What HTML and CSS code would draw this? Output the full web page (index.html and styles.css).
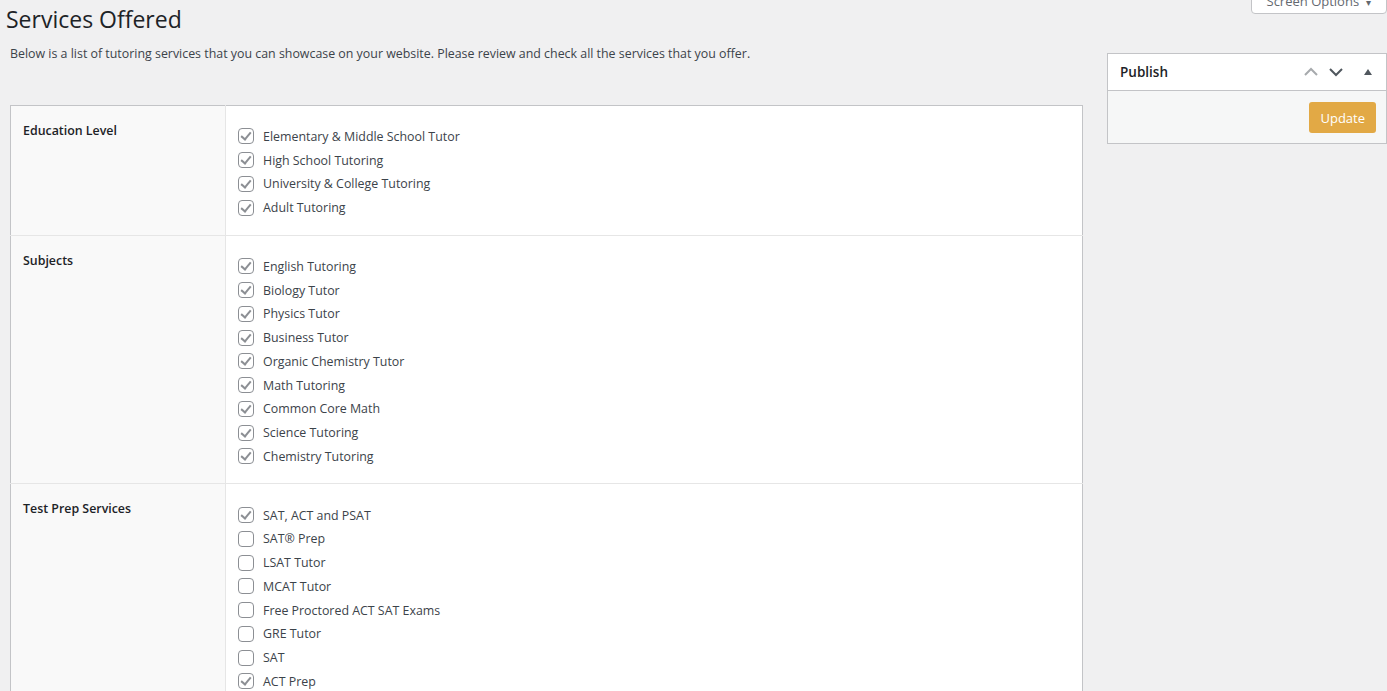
FILE: index.html
```html
<!DOCTYPE html>
<html lang="en">
<head>
    <meta charset="UTF-8">
    <meta name="viewport" content="width=device-width, initial-scale=1.0">
    <title>Services Offered</title>
    <link rel="stylesheet" href="styles.css">
</head>
<body>
    <div class="screen-tab">Screen Options <span class="caret">&#9662;</span></div>
    <div class="page">
        <div class="main">
            <h1>Services Offered</h1>
            <p class="intro">Below is a list of tutoring services that you can showcase on your website. Please review and check all the services that you offer.</p>
            <table class="services">
                <tr>
                    <th>Education Level</th>
                    <td>
                        <label class="item"><input type="checkbox" checked> Elementary &amp; Middle School Tutor</label>
                        <label class="item"><input type="checkbox" checked> High School Tutoring</label>
                        <label class="item"><input type="checkbox" checked> University &amp; College Tutoring</label>
                        <label class="item"><input type="checkbox" checked> Adult Tutoring</label>
                    </td>
                </tr>
                <tr>
                    <th>Subjects</th>
                    <td>
                        <label class="item"><input type="checkbox" checked> English Tutoring</label>
                        <label class="item"><input type="checkbox" checked> Biology Tutor</label>
                        <label class="item"><input type="checkbox" checked> Physics Tutor</label>
                        <label class="item"><input type="checkbox" checked> Business Tutor</label>
                        <label class="item"><input type="checkbox" checked> Organic Chemistry Tutor</label>
                        <label class="item"><input type="checkbox" checked> Math Tutoring</label>
                        <label class="item"><input type="checkbox" checked> Common Core Math</label>
                        <label class="item"><input type="checkbox" checked> Science Tutoring</label>
                        <label class="item"><input type="checkbox" checked> Chemistry Tutoring</label>
                    </td>
                </tr>
                <tr>
                    <th>Test Prep Services</th>
                    <td>
                        <label class="item"><input type="checkbox" checked> SAT, ACT and PSAT</label>
                        <label class="item"><input type="checkbox"> SAT® Prep</label>
                        <label class="item"><input type="checkbox"> LSAT Tutor</label>
                        <label class="item"><input type="checkbox"> MCAT Tutor</label>
                        <label class="item"><input type="checkbox"> Free Proctored ACT SAT Exams</label>
                        <label class="item"><input type="checkbox"> GRE Tutor</label>
                        <label class="item"><input type="checkbox"> SAT</label>
                        <label class="item"><input type="checkbox" checked> ACT Prep</label>
                    </td>
                </tr>
            </table>
        </div>
        <div class="side">
            <div class="postbox">
                <div class="postbox-head">
                    <h2>Publish</h2>
                    <div class="handles">
                        <svg width="16" height="10" viewBox="0 0 16 10"><path d="M2 8 L8 2 L14 8" fill="none" stroke="#a7aaad" stroke-width="2"/></svg>
                        <svg width="16" height="10" viewBox="0 0 16 10"><path d="M2 2 L8 8 L14 2" fill="none" stroke="#50575e" stroke-width="2"/></svg>
                        <svg class="toggle" width="10" height="8" viewBox="0 0 10 8"><path d="M1 7 L5 1 L9 7 Z" fill="#50575e"/></svg>
                    </div>
                </div>
                <div class="postbox-body">
                    <button class="update" type="button">Update</button>
                </div>
            </div>
        </div>
    </div>
</body>
</html>
```

FILE: styles.css
```css
body {
    margin: 0;
    background-color: #f0f0f1;
    color: #3c434a;
    font-family: "Open Sans", "Noto Sans", sans-serif;
    font-size: 12.4px;
}

.screen-tab {
    position: absolute;
    top: -12px;
    right: 0;
    width: 136px;
    height: 26px;
    line-height: 24px;
    text-align: center;
    background-color: #fff;
    border: 1px solid #c3c4c7;
    border-radius: 0 0 4px 4px;
    color: #646970;
    font-size: 13px;
    box-sizing: border-box;
}

.caret {
    font-size: 10px;
    margin-left: 4px;
}

.page {
    display: flex;
    align-items: flex-start;
}

.main {
    width: 1073px;
    margin-left: 10px;
}

h1 {
    margin: 0 0 0 -4px;
    padding-top: 5px;
    font-size: 23px;
    font-weight: 400;
    line-height: 1.3;
    color: #1d2327;
}

.intro {
    margin: 10px 0 41px 0;
    line-height: 1.5;
}

.services {
    width: 100%;
    border-collapse: collapse;
    background-color: #fff;
    border: 1px solid #c3c4c7;
}

.services th {
    width: 190px;
    padding: 16px 12px 15px 12px;
    text-align: left;
    vertical-align: top;
    font-weight: 600;
    color: #1d2327;
    background-color: #f9f9f9;
    border-right: 1px solid #e6e6e6;
    border-bottom: 1px solid #e6e6e6;
    line-height: 1.4;
}

.services td {
    padding: 19px 12px 15px 12px;
    vertical-align: top;
    border-bottom: 1px solid #e6e6e6;
}

.item {
    display: flex;
    align-items: center;
    height: 23.75px;
}

.item input {
    appearance: none;
    width: 16px;
    height: 16px;
    margin: 0 9px 0 0;
    border: 1px solid #8c8f94;
    border-radius: 4px;
    background: #fff;
    position: relative;
}

.item input:checked::after {
    content: "";
    position: absolute;
    left: 4px;
    top: 1px;
    width: 4px;
    height: 8px;
    border: solid #8c8f94;
    border-width: 0 2px 2px 0;
    transform: rotate(40deg);
}

.side {
    width: 280px;
    margin-left: 24px;
    margin-top: 53px;
}

.postbox {
    background-color: #f6f7f7;
    border: 1px solid #c3c4c7;
}

.postbox-head {
    display: flex;
    align-items: center;
    justify-content: space-between;
    height: 36px;
    padding-left: 12px;
    background-color: #fff;
    border-bottom: 1px solid #c3c4c7;
}

.postbox-head h2 {
    margin: 0;
    font-size: 13.5px;
    font-weight: 600;
    color: #1d2327;
}

.handles {
    display: flex;
    align-items: center;
    gap: 9px;
    padding-right: 13px;
}

.handles .toggle {
    margin-left: 10px;
}

.postbox-body {
    display: flex;
    justify-content: flex-end;
    padding: 11px 10px 10px 10px;
}

.update {
    height: 31px;
    padding: 0 11px;
    border: none;
    border-radius: 3px;
    background-color: #e2a945;
    color: #fff;
    font-family: inherit;
    font-size: 13px;
}
```
